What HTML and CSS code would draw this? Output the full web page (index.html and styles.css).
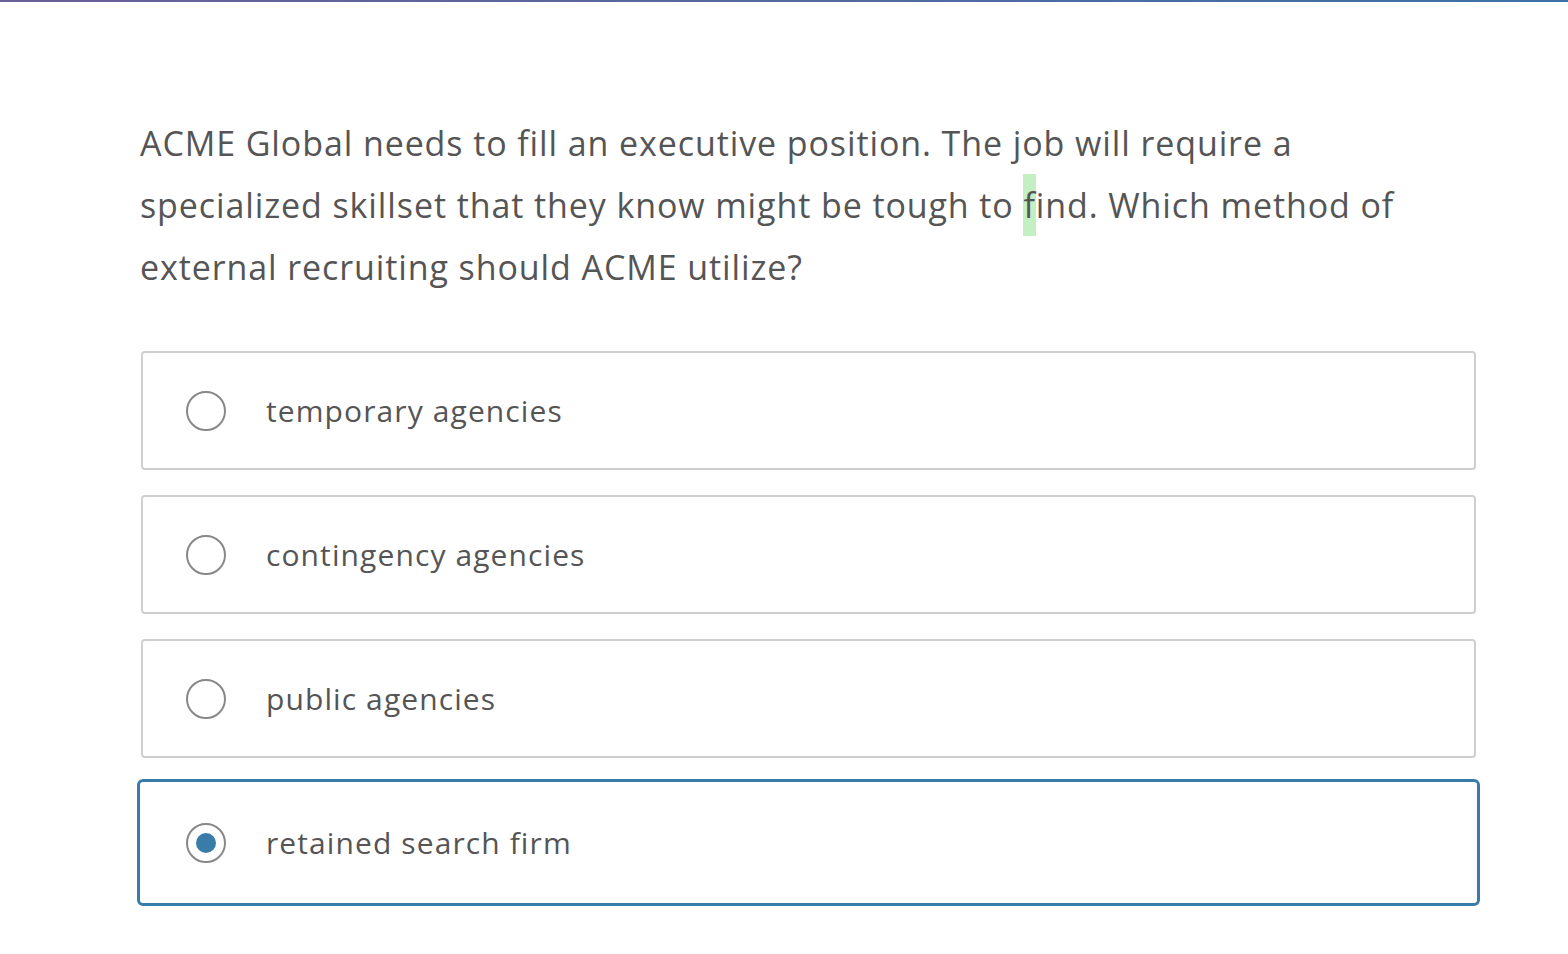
FILE: index.html
```html
<!DOCTYPE html>
<html lang="en">
<head>
<meta charset="utf-8">
<title>Question</title>
<link rel="stylesheet" href="styles.css">
</head>
<body>
<div class="topbar"></div>
<main class="quiz">
  <p class="question">ACME Global needs to fill an executive position. The job will require a specialized skillset that they know might be tough to <span class="mark">f</span>ind. Which method of external recruiting should ACME utilize?</p>
  <div class="options">
    <label class="option">
      <span class="radio"></span>
      <span class="label">temporary agencies</span>
    </label>
    <label class="option">
      <span class="radio"></span>
      <span class="label">contingency agencies</span>
    </label>
    <label class="option">
      <span class="radio"></span>
      <span class="label">public agencies</span>
    </label>
    <label class="option selected">
      <span class="radio"></span>
      <span class="label">retained search firm</span>
    </label>
  </div>
</main>
</body>
</html>
```
FILE: styles.css
```css
* { box-sizing: border-box; }
html, body { margin: 0; padding: 0; background: #fff; }
body {
  font-family: "Open Sans", "Liberation Sans", sans-serif;
  color: #555;
}
.topbar {
  height: 2px;
  background: linear-gradient(to right, #6b5f98, #3d72a6);
}
.quiz {
  padding: 110px 92px 40px 141px;
}
.question {
  margin: 0 0 53px -1px;
  max-width: 1300px;
  font-size: 34px;
  line-height: 62px;
  letter-spacing: 0.9px;
  color: #555;
}
.mark {
  background: #c3efc3;
  padding: 8px 0;
}
.options {
  display: flex;
  flex-direction: column;
  gap: 25px;
}
.option {
  display: flex;
  align-items: center;
  height: 119px;
  border: 2px solid #cfcfcf;
  border-radius: 4px;
  padding: 0 43px;
  cursor: pointer;
}
.option.selected {
  height: 127px;
  margin: -4px;
  border: 3px solid #3a7ca8;
  border-radius: 6px;
  padding: 0 46px;
}
.radio {
  width: 40px;
  height: 40px;
  flex: none;
  border: 2px solid #888;
  border-radius: 50%;
  display: flex;
  align-items: center;
  justify-content: center;
}
.option.selected .radio::after {
  content: "";
  width: 20px;
  height: 20px;
  border-radius: 50%;
  background: #3a7ca8;
}
.label {
  margin-left: 40px;
  font-size: 30px;
  letter-spacing: 1.1px;
  color: #555;
}
```
